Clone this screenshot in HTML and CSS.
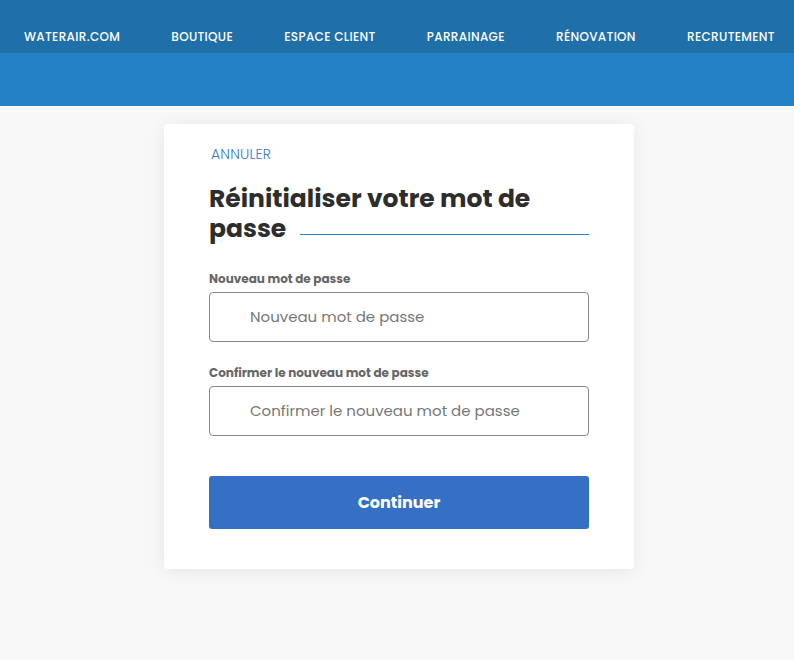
FILE: index.html
```html
<!DOCTYPE html>
<html lang="fr">
<head>
<meta charset="utf-8">
<title>Réinitialiser votre mot de passe</title>
<link rel="stylesheet" href="styles.css">
</head>
<body>
<header class="topbar">
  <nav class="nav">
    <a href="#">WATERAIR.COM</a>
    <a href="#">BOUTIQUE</a>
    <a href="#">ESPACE CLIENT</a>
    <a href="#">PARRAINAGE</a>
    <a href="#">RÉNOVATION</a>
    <a href="#">RECRUTEMENT</a>
  </nav>
</header>
<div class="banner"></div>
<main class="page">
  <section class="card">
    <a class="cancel" href="#">ANNULER</a>
    <h1 class="title">
      <span class="title-line">Réinitialiser votre mot de</span>
      <span class="title-last"><span>passe</span><span class="rule"></span></span>
    </h1>
    <form class="form">
      <label class="label" for="pw1">Nouveau mot de passe</label>
      <input class="input" id="pw1" type="password" placeholder="Nouveau mot de passe">
      <label class="label" for="pw2">Confirmer le nouveau mot de passe</label>
      <input class="input" id="pw2" type="password" placeholder="Confirmer le nouveau mot de passe">
      <button class="btn" type="button">Continuer</button>
    </form>
  </section>
</main>
</body>
</html>
```

FILE: styles.css
```css
* { box-sizing: border-box; }
html, body { margin: 0; padding: 0; }
body {
  background: #f8f8f8;
  font-family: "Poppins", "Open Sans", "Noto Sans", sans-serif;
  color: #2d2d2d;
  min-height: 660px;
}
.topbar {
  background: #1f6fa8;
  height: 53px;
}
.nav {
  display: flex;
  gap: 51.2px;
  padding: 30px 0 0 24px;
}
.nav a {
  color: #ffffff;
  text-decoration: none;
  font-size: 12px;
  font-weight: 500;
  letter-spacing: 0.32px;
  line-height: 14px;
  white-space: nowrap;
}
.banner {
  background: #2382c6;
  height: 53px;
}
.page {
  display: flex;
  justify-content: center;
  padding-top: 18px;
  padding-left: 4px;
}
.card {
  width: 470px;
  height: 445px;
  background: #fff;
  border-radius: 4px;
  box-shadow: 0 2px 18px rgba(0,0,0,0.08);
  padding: 20px 45px 0 45px;
  display: flex;
  flex-direction: column;
}
.cancel {
  color: #3b7cc4;
  font-size: 14px;
  font-weight: 300;
  letter-spacing: 0.2px;
  text-decoration: none;
  margin-left: 2px;
  line-height: 20px;
}
.title {
  margin: 20px 0 0;
  font-size: 25px;
  font-weight: 700;
  line-height: 30px;
  color: #2d2d2d;
  display: flex;
  flex-direction: column;
}
.title-last {
  display: flex;
  align-items: flex-end;
}
.rule {
  flex: 1;
  height: 1px;
  background: #2382c6;
  margin: 0 0 9px 14px;
}
.form {
  display: flex;
  flex-direction: column;
  margin-top: 27px;
}
.label {
  font-size: 12px;
  font-weight: 700;
  color: #666;
  line-height: 16px;
  margin-bottom: 5px;
}
.input {
  height: 50px;
  border: 1px solid #888;
  border-radius: 4px;
  padding: 0 0 2px 40px;
  font-family: inherit;
  font-size: 15px;
  color: #333;
  margin-bottom: 23px;
}
.input::placeholder { color: #777; }
.btn {
  margin-top: 17px;
  height: 53px;
  border: none;
  border-radius: 3px;
  background: #3670c4;
  color: #fff;
  font-family: inherit;
  font-size: 16px;
  font-weight: 700;
  padding-bottom: 2px;
}
```
